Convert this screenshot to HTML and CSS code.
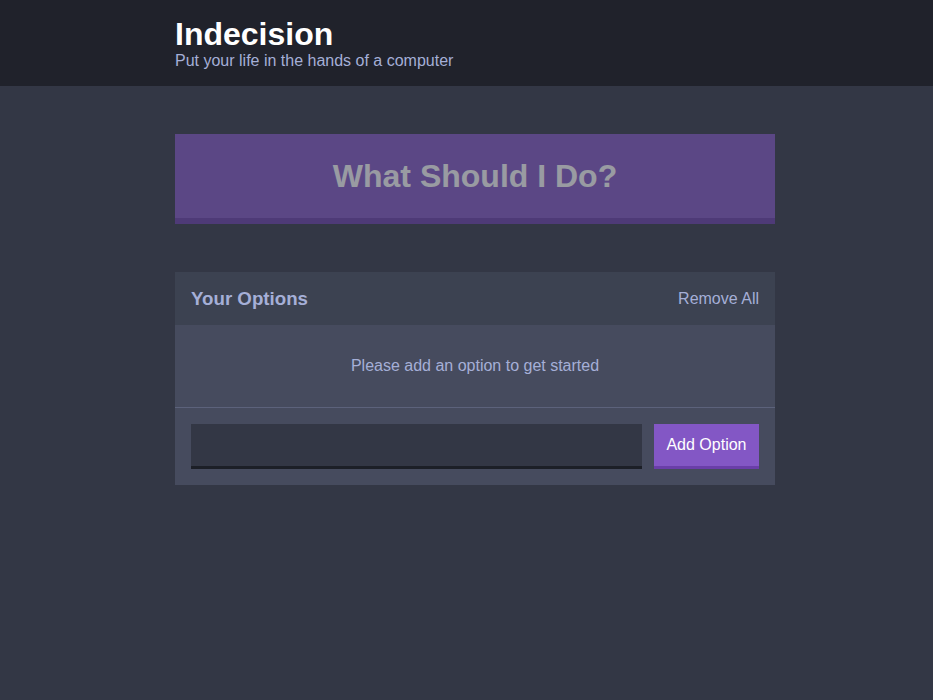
FILE: index.html
```html
<!DOCTYPE html>
<html>
<head>
<meta charset="utf-8">
<title>Indecision</title>
<link rel="stylesheet" href="styles.css">
</head>
<body>
<header class="header">
  <div class="container">
    <h1 class="header__title">Indecision</h1>
    <h2 class="header__subtitle">Put your life in the hands of a computer</h2>
  </div>
</header>
<main class="container main">
  <button class="big-button" disabled>What Should I Do?</button>
  <div class="widget">
    <div class="widget-header">
      <h3 class="widget-header__title">Your Options</h3>
      <button class="button--link">Remove All</button>
    </div>
    <p class="widget__message">Please add an option to get started</p>
    <form class="add-option">
      <input class="add-option__input" type="text" name="option">
      <button class="button" type="button">Add Option</button>
    </form>
  </div>
</main>
</body>
</html>
```

FILE: styles.css
```css
* { box-sizing: border-box; }
html, body { margin: 0; padding: 0; }
body {
  background: #333745;
  color: #ffffff;
  font-family: "Liberation Sans", Arial, Helvetica, sans-serif;
  font-size: 16px;
  min-height: 700px;
  padding-left: 17px;
}
.header {
  background: #20222b;
  margin-left: -17px;
  padding: 16px 0 16px 17px;
}
.container {
  width: 600px;
  margin: 0 auto;
}
.header__title {
  font-size: 32px;
  font-weight: bold;
  margin: 0;
  color: #ffffff;
  line-height: 36px;
}
.header__subtitle {
  color: #a5afd7;
  font-size: 16px;
  font-weight: normal;
  margin: 0;
  line-height: 18px;
}
.main {
  padding-top: 48px;
}
.big-button {
  display: block;
  width: 100%;
  background: #8357c5;
  border: none;
  border-bottom: 6px solid #6a3ea9;
  color: #ffffff;
  font-family: inherit;
  font-weight: bold;
  font-size: 32px;
  line-height: 37px;
  padding: 24px 0 23px;
  margin: 0 0 48px;
  opacity: 0.5;
}
.widget {
  background: #464b5e;
  margin-bottom: 48px;
}
.widget-header {
  background: #3c4251;
  color: #a5afd7;
  display: flex;
  justify-content: space-between;
  align-items: center;
  padding: 16px;
  height: 53px;
}
.widget-header__title {
  margin: 0;
  font-size: 18.7px;
  font-weight: bold;
}
.button--link {
  background: none;
  border: none;
  color: #a5afd7;
  padding: 0;
  font-family: inherit;
  font-size: 16px;
}
.widget__message {
  border-bottom: 1px solid #5c627b;
  color: #a5afd7;
  margin: 0;
  padding: 32px;
  text-align: center;
  line-height: 18px;
  height: 83px;
}
.add-option {
  display: flex;
  padding: 16px;
  margin: 0;
}
.add-option__input {
  background: #333745;
  border: none;
  border-bottom: 3px solid #1c1f27;
  color: #a5afd7;
  flex-grow: 1;
  margin-right: 12px;
  padding: 12px;
  height: 45px;
  font-family: inherit;
  font-size: 16px;
}
.button {
  background: #8357c5;
  border: none;
  border-bottom: 3px solid #6a3ea9;
  color: #ffffff;
  font-family: inherit;
  font-size: 16px;
  padding: 0 12.5px;
  height: 45px;
}
```
